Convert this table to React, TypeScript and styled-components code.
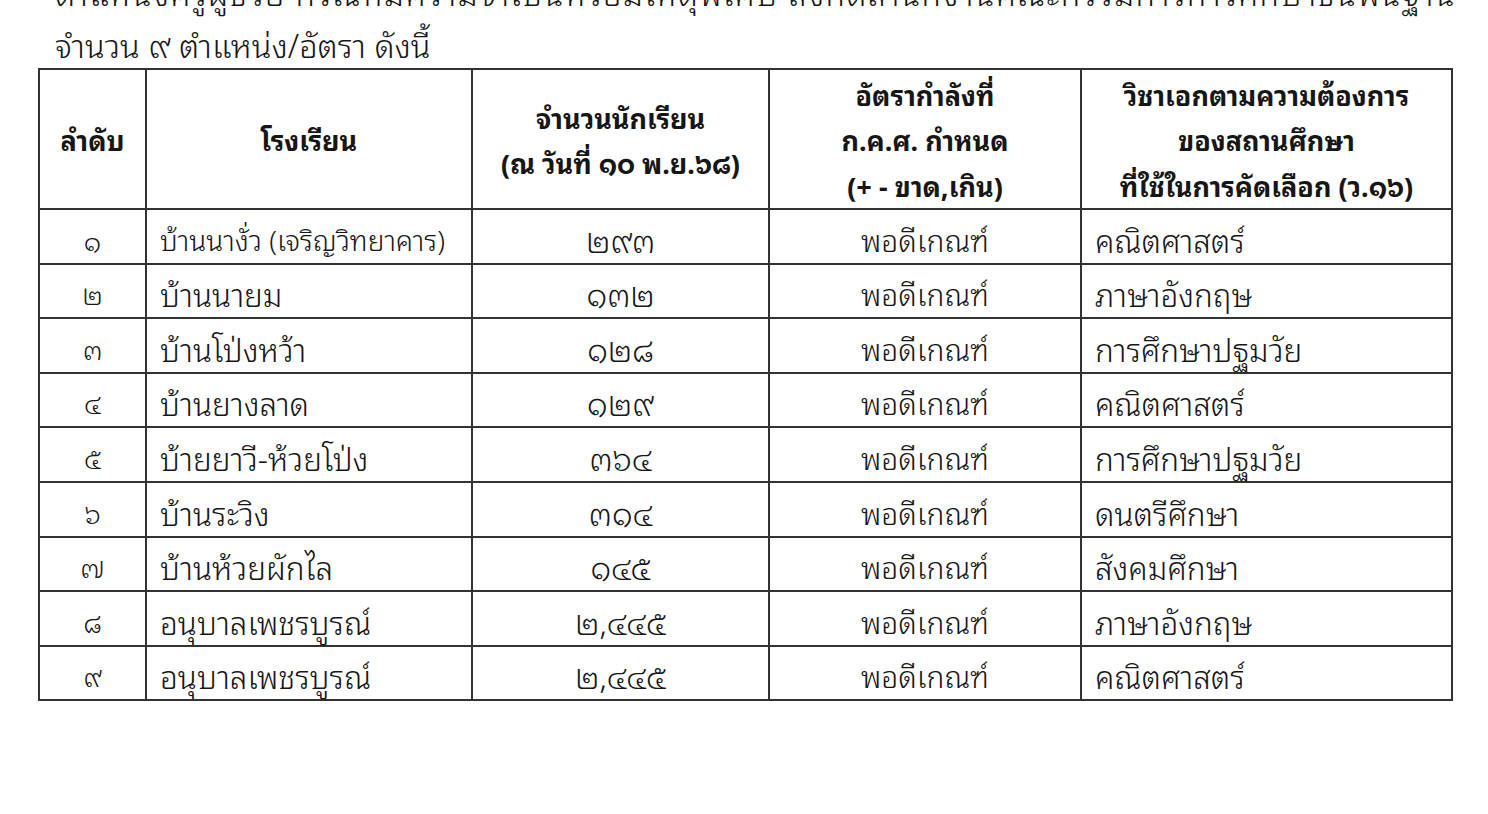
import React from 'react';
import styled, { createGlobalStyle } from 'styled-components';

const GlobalStyle = createGlobalStyle`
  html, body { margin: 0; padding: 0; background: #fff; }
  body {
    color: #161616;
    font-family: "Noto Sans Thai Looped", "Noto Sans Thai", sans-serif;
    overflow: hidden;
  }
`;

const Page = styled.div`
  width: 1488px;
  height: 814px;
  padding-left: 38px;
  box-sizing: border-box;
  overflow: hidden;
`;

const Intro = styled.div`
  margin-top: -35px;
  padding-left: 17px;
  width: 1397px;
  font-size: 32.6px;
  line-height: 52px;
  font-weight: 330;
`;

const IntroLine = styled.div<{ $justify?: boolean }>`
  white-space: nowrap;
  letter-spacing: ${({ $justify }) => ($justify ? '1.3px' : '0')};
  text-align: ${({ $justify }) => ($justify ? 'justify' : 'left')};
  text-align-last: ${({ $justify }) => ($justify ? 'justify' : 'left')};
`;

const Table = styled.table`
  margin-top: -1px;
  border-collapse: collapse;
  table-layout: fixed;
  width: 1415px;
  border: 2px solid #333;
`;

const HeadCell = styled.th`
  border: 2px solid #333;
  height: 138px;
  padding: 0;
  text-align: center;
  vertical-align: middle;
  font-size: 27px;
  line-height: 45.5px;
  font-weight: 700;
`;

const BodyRow = styled.tr`
  height: 54.6px;
`;

type Align = 'left' | 'center';

const Cell = styled.td<{ $align?: Align; $size?: number }>`
  border: 2px solid #333;
  padding: 0 0 4px ${({ $align }) => ($align === 'left' ? '13px' : '0')};
  text-align: ${({ $align }) => $align || 'center'};
  vertical-align: bottom;
  font-size: ${({ $size }) => $size || 31.5}px;
  font-weight: 330;
  line-height: 40px;
  white-space: nowrap;
`;

const rows = [
  { no: '๑', school: 'บ้านนางั่ว (เจริญวิทยาคาร)', small: true, students: '๒๙๓', subject: 'คณิตศาสตร์' },
  { no: '๒', school: 'บ้านนายม', students: '๑๓๒', subject: 'ภาษาอังกฤษ' },
  { no: '๓', school: 'บ้านโป่งหว้า', students: '๑๒๘', subject: 'การศึกษาปฐมวัย' },
  { no: '๔', school: 'บ้านยางลาด', students: '๑๒๙', subject: 'คณิตศาสตร์' },
  { no: '๕', school: 'บ้ายยาวี-ห้วยโป่ง', students: '๓๖๔', subject: 'การศึกษาปฐมวัย' },
  { no: '๖', school: 'บ้านระวิง', students: '๓๑๔', subject: 'ดนตรีศึกษา' },
  { no: '๗', school: 'บ้านห้วยผักไล', students: '๑๔๕', subject: 'สังคมศึกษา' },
  { no: '๘', school: 'อนุบาลเพชรบูรณ์', students: '๒,๔๔๕', subject: 'ภาษาอังกฤษ' },
  { no: '๙', school: 'อนุบาลเพชรบูรณ์', students: '๒,๔๔๕', subject: 'คณิตศาสตร์' },
];

export default function App() {
  return (
    <>
      <GlobalStyle />
      <Page>
        <Intro>
          <IntroLine $justify>ตำแหน่งครูผู้ช่วย กรณีที่มีความจำเป็นหรือมีเหตุพิเศษ สังกัดสำนักงานคณะกรรมการการศึกษาขั้นพื้นฐาน</IntroLine>
          <IntroLine>จำนวน ๙ ตำแหน่ง/อัตรา ดังนี้</IntroLine>
        </Intro>
        <Table>
          <colgroup>
            <col style={{ width: 107 }} />
            <col style={{ width: 326 }} />
            <col style={{ width: 297 }} />
            <col style={{ width: 312 }} />
            <col />
          </colgroup>
          <thead>
            <tr>
              <HeadCell>ลำดับ</HeadCell>
              <HeadCell>โรงเรียน</HeadCell>
              <HeadCell>จำนวนนักเรียน<br />(ณ วันที่ ๑๐ พ.ย.๖๘)</HeadCell>
              <HeadCell>อัตรากำลังที่<br />ก.ค.ศ. กำหนด<br />(+ - ขาด,เกิน)</HeadCell>
              <HeadCell>วิชาเอกตามความต้องการ<br />ของสถานศึกษา<br />ที่ใช้ในการคัดเลือก (ว.๑๖)</HeadCell>
            </tr>
          </thead>
          <tbody>
            {rows.map((r, i) => (
              <BodyRow key={i}>
                <Cell $size={27}>{r.no}</Cell>
                <Cell $align="left" $size={r.small ? 28 : 31.5}>{r.school}</Cell>
                <Cell $size={32}>{r.students}</Cell>
                <Cell $size={30}>พอดีเกณฑ์</Cell>
                <Cell $align="left">{r.subject}</Cell>
              </BodyRow>
            ))}
          </tbody>
        </Table>
      </Page>
    </>
  );
}
